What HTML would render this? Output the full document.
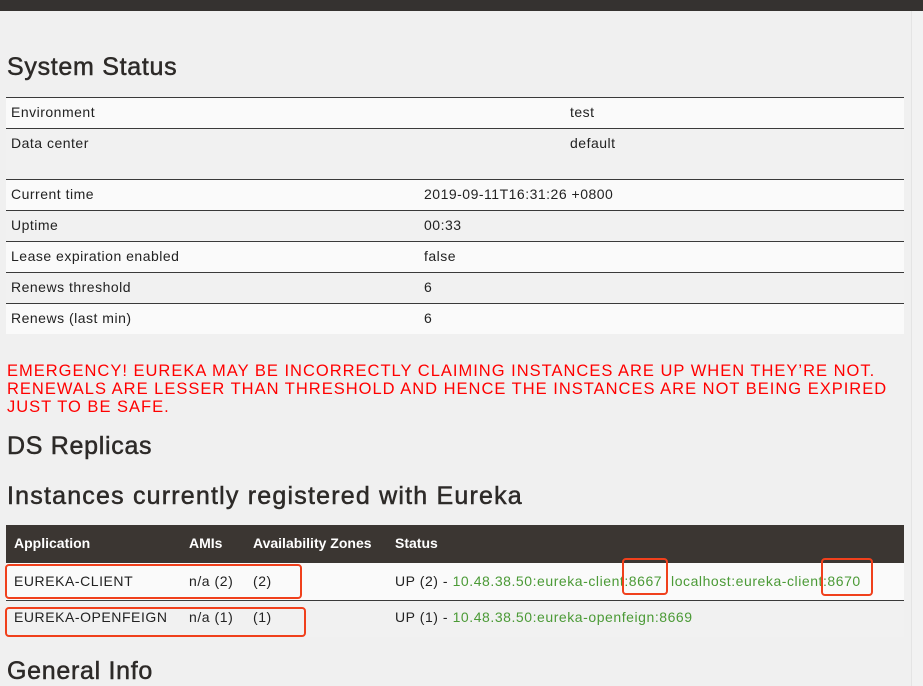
<!DOCTYPE html>
<html><head><meta charset="utf-8"><style>
body{margin:0;width:923px;height:686px;overflow:hidden;background:#f0f0f0;font-family:"Liberation Sans",sans-serif;color:#222;position:relative}
.top{position:absolute;left:0;top:0;width:923px;height:11px;background:#353230}
.sb{position:absolute;left:911px;top:11px;width:12px;height:675px;background:#f2f2f2;border-left:1px solid #e4e4e4}
h2{position:absolute;margin:0;font-weight:normal;font-size:25px;letter-spacing:0.7px;color:#2d2a28;left:7px;-webkit-text-stroke:0.5px #2d2a28}
.row{position:absolute;left:6px;width:898px;border-top:1px solid #3a3a3a;font-size:14px;letter-spacing:0.5px;box-sizing:border-box}
.row span{position:absolute;top:6px}
.w{background:#fafafa}.g{background:#f1f1f1}
.red{position:absolute;left:7px;top:362px;color:#f00;font-size:16.5px;letter-spacing:1px;line-height:18px;width:910px;white-space:nowrap}
.hd{position:absolute;left:6px;top:525px;width:898px;height:38px;background:#3b3632;color:#fff;font-size:14px;font-weight:bold}
.hd span,.r span{position:absolute;top:10px}
.r{position:absolute;left:6px;width:898px;font-size:14px;letter-spacing:0.55px;box-sizing:border-box}
.gr{color:#4b9a36}
.box{position:absolute;border:2px solid #f0401c;border-radius:4px}
</style></head><body>
<div class="top"></div><div class="sb"></div>
<h2 style="top:53px">System Status</h2>
<div class="row w" style="top:97px;height:31px"><span style="left:5px">Environment</span><span style="left:564px">test</span></div>
<div class="row g" style="top:128px;height:51px"><span style="left:5px">Data center</span><span style="left:564px">default</span></div>
<div class="row w" style="top:179px;height:31px"><span style="left:5px">Current time</span><span style="left:418px">2019-09-11T16:31:26 +0800</span></div>
<div class="row g" style="top:210px;height:31px"><span style="left:5px">Uptime</span><span style="left:418px">00:33</span></div>
<div class="row w" style="top:241px;height:31px"><span style="left:5px">Lease expiration enabled</span><span style="left:418px">false</span></div>
<div class="row g" style="top:272px;height:31px"><span style="left:5px">Renews threshold</span><span style="left:418px">6</span></div>
<div class="row w" style="top:303px;height:31px"><span style="left:5px">Renews (last min)</span><span style="left:418px">6</span></div>
<div class="red">EMERGENCY! EUREKA MAY BE INCORRECTLY CLAIMING INSTANCES ARE UP WHEN THEY’RE NOT.<br>RENEWALS ARE LESSER THAN THRESHOLD AND HENCE THE INSTANCES ARE NOT BEING EXPIRED<br>JUST TO BE SAFE.</div>
<h2 style="top:432px">DS Replicas</h2>
<h2 style="top:482px;letter-spacing:1.2px">Instances currently registered with Eureka</h2>
<div class="hd"><span style="left:8px">Application</span><span style="left:183px">AMIs</span><span style="left:247px">Availability Zones</span><span style="left:389px">Status</span></div>
<div class="r w" style="top:563px;height:38px;border-bottom:1px solid #3a3a3a"><span style="left:8px">EUREKA-CLIENT</span><span style="left:183px">n/a (2)</span><span style="left:247px">(2)</span><span style="left:389px">UP (2) - <span class="gr" style="position:static">10.48.38.50:eureka-client:8667</span> &nbsp;<span class="gr" style="position:static">localhost:eureka-client:8670</span></span></div>
<div class="r g" style="top:601px;height:36px"><span style="left:8px;top:8px">EUREKA-OPENFEIGN</span><span style="left:183px;top:8px">n/a (1)</span><span style="left:247px;top:8px">(1)</span><span style="left:389px;top:8px">UP (1) - <span class="gr" style="position:static">10.48.38.50:eureka-openfeign:8669</span></span></div>
<div class="box" style="left:5px;top:564px;width:293px;height:31px"></div>
<div class="box" style="left:5px;top:607px;width:297px;height:26px"></div>
<div class="box" style="left:622px;top:558px;width:42px;height:33px"></div>
<div class="box" style="left:821px;top:558px;width:48px;height:34px"></div>
<h2 style="top:657px">General Info</h2>
</body></html>
